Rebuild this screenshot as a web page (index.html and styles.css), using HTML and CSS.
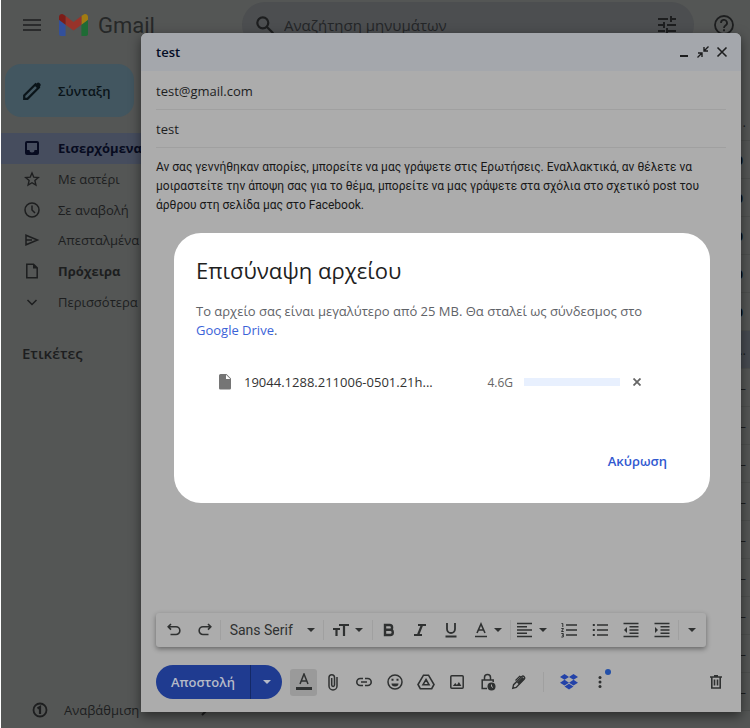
FILE: index.html
```html
<!DOCTYPE html>
<html lang="el">
<head>
<meta charset="utf-8">
<title>Gmail</title>
<link rel="stylesheet" href="styles.css">
</head>
<body>
<div class="app">
  <header class="topbar">
    <button class="icon-btn menu" aria-label="Μενού"><svg width="18" height="14" viewBox="0 0 18 14"><path d="M0 2h18M0 7h18M0 12h18" stroke="currentColor" stroke-width="1.600"/></svg></button>
    <a class="brand" href="#">
      <svg width="29" height="22" viewBox="52 42 88 66"><path fill="#33509b" d="M58 108h14V74L52 59v43c0 3.320 2.690 6 6 6"/><path fill="#1f6b35" d="M120 108h14c3.320 0 6-2.690 6-6V59l-20 15"/><path fill="#a17c12" d="M120 48v26l20-15v-8c0-7.420-8.470-11.650-14.400-7.200"/><path fill="#98332a" d="M72 74V48l24 18 24-18v26L96 92"/><path fill="#7d1c18" d="M52 51v8l20 15V48l-5.600-4.200c-5.940-4.450-14.400-.220-14.400 7.200"/></svg>
      <span>Gmail</span>
    </a>
    <form class="search">
      <svg width="18" height="18" viewBox="0 0 18 18" fill="none" stroke="currentColor" stroke-width="2.200"><circle cx="6.800" cy="6.800" r="5.500"/><path d="M11 11l6.200 6.200"/></svg>
      <input type="text" aria-label="Αναζήτηση μηνυμάτων" placeholder="Αναζήτηση μηνυμάτων">
      <button type="button" class="icon-btn" aria-label="Φίλτρα"><svg width="18" height="18" viewBox="0 0 18 18" stroke="currentColor" stroke-width="2"><path d="M0 3h10M13 3h5M13 0v6M0 9h6M9 9h9M6 6v6M0 15h7M10 15h8M9 12v6"/></svg></button>
    </form>
    <button class="icon-btn help" aria-label="Βοήθεια"><svg width="20" height="20" viewBox="0 0 20 20" fill="none" stroke="currentColor" stroke-width="1.800"><circle cx="10" cy="10" r="9"/><path d="M7 8a3 3 0 1 1 4.500 2.500Q10 11.500 10 13M10 14.200v2"/></svg></button>
  </header>
  <div class="main">
    <nav class="sidebar">
      <button class="compose-btn"><svg width="18" height="18" viewBox="0 0 18 18"><path d="M1.200 16.800v-3.300L12.500 2.200l3.300 3.300L4.500 16.800z" fill="none" stroke="currentColor" stroke-width="2.200"/><path d="M11.500 3.500L14 1q1.200-1 2.400 0l.8.800q1 1.200 0 2.400l-2.500 2.500z" fill="currentColor"/></svg>Σύνταξη</button>
      <div class="nav-list">
        <a class="nav active" href="#"><svg width="16" height="16" viewBox="0 0 16 16"><path fill-rule="evenodd" d="M3 1h10a2 2 0 0 1 2 2v10a2 2 0 0 1-2 2H3a2 2 0 0 1-2-2V3a2 2 0 0 1 2-2zM3 3v7h2.500a2.500 2.500 0 0 0 5 0H13V3z" fill="currentColor"/></svg>Εισερχόμενα</a>
        <a class="nav" href="#"><svg width="16" height="16" viewBox="0 0 16 16"><path d="M8 2l1.800 4.200 4.500.4-3.400 3 1 4.400L8 11.700 4.100 14l1-4.400-3.400-3 4.500-.4z" fill="none" stroke="currentColor" stroke-width="1.400"/></svg>Με αστέρι</a>
        <a class="nav" href="#"><svg width="16" height="16" viewBox="0 0 16 16" fill="none" stroke="currentColor" stroke-width="1.500"><circle cx="8" cy="8" r="7"/><path d="M8 3.500V8l3 3"/></svg>Σε αναβολή</a>
        <a class="nav" href="#"><svg width="16" height="16" viewBox="0 0 16 16" fill="none" stroke="currentColor" stroke-width="1.500"><path d="M2 3.200L13.500 8 2 12.800zM2 8h6"/></svg>Απεσταλμένα</a>
        <a class="nav strong" href="#"><svg width="16" height="16" viewBox="0 0 16 16"><path d="M2.800 1.200h6.700l3.700 3.700v9.900H2.800z" fill="none" stroke="currentColor" stroke-width="1.500"/><path d="M9 1v4.500h4.500z" fill="currentColor"/></svg>Πρόχειρα</a>
        <a class="nav" href="#"><svg width="16" height="16" viewBox="0 0 16 16"><path d="M3.500 6L8 10.500 12.500 6" fill="none" stroke="currentColor" stroke-width="1.500"/></svg>Περισσότερα</a>
      </div>
      <h2>Ετικέτες</h2>
      <a class="upgrade" href="#"><svg width="16" height="16" viewBox="0 0 16 16" fill="none" stroke="currentColor" stroke-width="1.800"><circle cx="8" cy="8" r="6.500"/><path d="M5.500 6.500L8 5v7" stroke-width="2.200"/></svg>Αναβάθμιση<svg class="arrow" width="14" height="14" viewBox="0 0 14 14"><path d="M1 7h11M7 2l5 5-5 5" fill="none" stroke="currentColor" stroke-width="2"/></svg></a>
    </nav>
    <ul class="mail-list">
      <li>.</li><li class="unread">0</li><li class="unread">0</li><li class="unread">0</li><li class="unread">0</li><li class="unread">0</li><li class="picked">..</li><li>–</li><li>–</li><li>–</li><li>–</li><li>–</li><li>–</li><li>–</li><li>–</li><li>–</li><li></li>
    </ul>
  </div>

  <section class="compose" aria-label="test">
    <header class="compose-head">
      <h1>test</h1>
      <button class="icon-btn" aria-label="Ελαχιστοποίηση"><svg width="12" height="12" viewBox="0 0 12 12"><path d="M2 10h8" stroke="currentColor" stroke-width="2"/></svg></button>
      <button class="icon-btn" aria-label="Σμίκρυνση"><svg width="12" height="12" viewBox="0 0 12 12" fill="none" stroke="currentColor" stroke-width="1.400"><path d="M11.500.5L7 5M7 1v4h4M.5 11.500L5 7M1 7h4v4"/></svg></button>
      <button class="icon-btn" aria-label="Κλείσιμο"><svg width="12" height="12" viewBox="0 0 12 12"><path d="M1.500 1.500l9 9M10.500 1.500l-9 9" stroke="currentColor" stroke-width="1.600"/></svg></button>
    </header>
    <div class="compose-body">
      <input class="field" type="text" aria-label="Προς" value="test@gmail.com">
      <input class="field" type="text" aria-label="Θέμα" value="test">
      <div class="message" contenteditable="true">Αν σας γεννήθηκαν απορίες, μπορείτε να μας γράψετε στις Ερωτήσεις. Εναλλακτικά, αν θέλετε να μοιραστείτε την άποψη σας για το θέμα, μπορείτε να μας γράψετε στα σχόλια στο σχετικό post του άρθρου στη σελίδα μας στο Facebook.</div>
      <div class="format">
        <button class="tool" aria-label="Αναίρεση"><svg width="16" height="16" viewBox="0 0 16 16" fill="none" stroke="currentColor" stroke-width="1.600"><path d="M5 2L2.200 4.800 5 7.600M2.500 4.800H10a3.800 3.800 0 0 1 0 7.700H4.500"/></svg></button>
        <button class="tool" aria-label="Επανάληψη"><svg width="16" height="16" viewBox="0 0 16 16" fill="none" stroke="currentColor" stroke-width="1.600"><path d="M11 2l2.800 2.800L11 7.600M13.500 4.800H6a3.800 3.800 0 0 0 0 7.700h5.500"/></svg></button>
        <i class="sep"></i>
        <button class="tool font">Sans Serif<i class="caret"></i></button>
        <i class="sep"></i>
        <button class="tool drop size" aria-label="Μέγεθος"><svg width="16" height="16" viewBox="0 0 16 16" fill="none" stroke="currentColor" stroke-width="2.200"><path d="M6 3h10M11 3v11M0 7h7M3.500 7v7"/></svg><i class="caret"></i></button>
        <i class="sep"></i>
        <button class="tool" aria-label="Έντονα"><svg width="16" height="16" viewBox="0 0 16 16" fill="none" stroke="currentColor" stroke-width="2.400"><path d="M4 3v10h5.200a2.600 2.600 0 0 0 0-5.200H4M4 3h4.700a2.400 2.400 0 0 1 0 4.800M4 1.800v12.400"/></svg></button>
        <button class="tool" aria-label="Πλάγια"><svg width="16" height="16" viewBox="0 0 16 16" fill="none" stroke="currentColor" stroke-width="2.200"><path d="M6 3h8M2 13h8M10 3L6 13"/></svg></button>
        <button class="tool" aria-label="Υπογράμμιση"><svg width="16" height="16" viewBox="0 0 16 16" fill="none" stroke="currentColor" stroke-width="1.800"><path d="M4 1v6a4 4 0 0 0 8 0V1M2.500 14.500h11"/></svg></button>
        <button class="tool drop" aria-label="Χρώμα"><svg width="14" height="16" viewBox="0 0 14 16" fill="none" stroke="currentColor" stroke-width="1.600"><path d="M3 11l4-9 4 9M4.500 8h5M1 14.500h12"/></svg><i class="caret"></i></button>
        <i class="sep"></i>
        <button class="tool drop" aria-label="Στοίχιση"><svg width="16" height="16" viewBox="0 0 16 16" stroke="currentColor" stroke-width="1.500"><path d="M0 1.500h15M0 4.800h10M0 8h15M0 11.200h10M0 14.500h15"/></svg><i class="caret"></i></button>
        <button class="tool" aria-label="Αριθμημένη λίστα"><svg width="16" height="16" viewBox="0 0 16 16" fill="none" stroke="currentColor" stroke-width="1.500"><path d="M5 3h11M5 8h11M5 13h11"/><path d="M.5 1.500h1.300v3.500M.3 6.500h2.200L.5 9.500h2.200M.3 11.500h2v3.500h-2M1 13.200h1" stroke-width="1"/></svg></button>
        <button class="tool" aria-label="Λίστα με κουκκίδες"><svg width="16" height="16" viewBox="0 0 16 16" stroke="currentColor" stroke-width="1.500"><path d="M5 3h11M5 8h11M5 13h11"/><path d="M.8 3h2M.8 8h2M.8 13h2" stroke-width="2"/></svg></button>
        <button class="tool" aria-label="Λιγότερη εσοχή"><svg width="16" height="16" viewBox="0 0 16 16" stroke="currentColor" stroke-width="1.500"><path d="M.5 1.500h15M6.500 4.800h9M6.500 8h9M6.500 11.200h9M.5 14.500h15"/><path d="M4 5L1 8l3 3z" fill="currentColor" stroke="none"/></svg></button>
        <button class="tool" aria-label="Περισσότερη εσοχή"><svg width="16" height="16" viewBox="0 0 16 16" stroke="currentColor" stroke-width="1.500"><path d="M.5 1.500h15M6.500 4.800h9M6.500 8h9M6.500 11.200h9M.5 14.500h15"/><path d="M1 5l3 3-3 3z" fill="currentColor" stroke="none"/></svg></button>
        <i class="sep"></i>
        <button class="tool more" aria-label="Περισσότερα"><i class="caret"></i></button>
      </div>
      <footer class="actions">
        <div class="send"><button class="send-main">Αποστολή</button><button class="send-more" aria-label="Επιλογές αποστολής"><i class="caret"></i></button></div>
        <button class="act on" aria-label="Μορφοποίηση"><svg width="16" height="18" viewBox="0 0 16 18" fill="none" stroke="currentColor" stroke-width="1.500"><path d="M4 11l4-10 4 10M5.300 8h5.400"/><path d="M0 15.500h16" stroke-width="3"/></svg></button>
        <button class="act" aria-label="Επισύναψη"><svg width="16" height="18" viewBox="0 0 16 18" fill="none" stroke="currentColor" stroke-width="1.500"><path d="M12 4v9a4 4 0 0 1-8 0V4.500a2.700 2.700 0 0 1 5.500 0V12a1.400 1.400 0 0 1-2.800 0V5"/></svg></button>
        <button class="act" aria-label="Σύνδεσμος"><svg width="16" height="16" viewBox="0 0 16 16" fill="none" stroke="currentColor" stroke-width="1.600"><path d="M7 4.500H4.300a3.500 3.500 0 0 0 0 7H7M9 4.500h2.700a3.500 3.500 0 0 1 0 7H9M5 8h6"/></svg></button>
        <button class="act" aria-label="Emoji"><svg width="16" height="16" viewBox="0 0 16 16" fill="none" stroke="currentColor" stroke-width="1.500"><circle cx="8" cy="8" r="7"/><path d="M4.500 5.800h2M9.500 5.800h2" stroke-width="2"/><path d="M4.500 9.500h7a3.500 3 0 0 1-7 0z" fill="currentColor" stroke="none"/></svg></button>
        <button class="act" aria-label="Drive"><svg width="18" height="16" viewBox="0 0 18 16" fill="none" stroke="currentColor" stroke-width="1.600"><path d="M6.500 1.200h5L17 10.500l-2.300 4.200H3.300L1 10.500zM9 5.500l3 5.200H6z"/></svg></button>
        <button class="act" aria-label="Εικόνα"><svg width="16" height="16" viewBox="0 0 16 16"><rect x="1.800" y="1.800" width="12.400" height="12.400" rx="1" fill="none" stroke="currentColor" stroke-width="1.500"/><path d="M3.800 12l2.500-3 1.600 2 2-3 2.500 4z" fill="currentColor"/></svg></button>
        <button class="act" aria-label="Εμπιστευτικό"><svg width="16" height="18" viewBox="0 0 16 18" fill="none" stroke="currentColor" stroke-width="1.500"><path d="M7 15.500H2.200V7h11v2M4.500 7V4.500a3 3 0 0 1 6 0V7"/><circle cx="11.500" cy="13.500" r="4" fill="currentColor" stroke="none"/><path d="M11.500 11.500v2l1.500 1" stroke="#acacac" stroke-width="1"/></svg></button>
        <button class="act" aria-label="Υπογραφή"><svg width="16" height="16" viewBox="0 0 16 16" fill="none" stroke="currentColor" stroke-width="1.400"><path d="M1.800 14.200l.8-3.500L10.800 2.500q1.200-1 2.400.2 1.200 1.200.1 2.400L5.200 13.400z"/><path d="M7 9.500l5.500-5.500" stroke-width="3"/><path d="M4.500 6.500l4.200-4.200 1.500 1" stroke-width="1.200"/></svg></button>
        <i class="sep"></i>
        <button class="act blue" aria-label="Dropbox"><svg width="18" height="16" viewBox="0 0 18 16" fill="currentColor"><path d="M4.500 0L9 2.900 4.500 5.800 0 2.900zM13.500 0L18 2.900l-4.500 2.900L9 2.900zM4.500 5.800L9 8.700l-4.500 2.900L0 8.700zM13.500 5.800L18 8.700l-4.500 2.900L9 8.700zM9 9.700l4.500 2.900L9 15.500l-4.500-2.900z"/></svg></button>
        <button class="act dotted" aria-label="Περισσότερες επιλογές"><svg width="4" height="14" viewBox="0 0 4 14" fill="currentColor"><circle cx="2" cy="2.500" r="1.500"/><circle cx="2" cy="7" r="1.500"/><circle cx="2" cy="11.500" r="1.500"/></svg><i class="badge"></i></button>
        <button class="act trash" aria-label="Απόρριψη"><svg width="12" height="14" viewBox="0 0 12 14" fill="none" stroke="currentColor" stroke-width="1.600"><path d="M0 2h12M4 .8h4M1.800 2v11h8.400V2M4.500 4.500v6M7.500 4.500v6"/></svg></button>
      </footer>
    </div>
    <div class="dialog" role="dialog" aria-labelledby="dialog-title">
      <h2 id="dialog-title">Επισύναψη αρχείου</h2>
      <p>Το αρχείο σας είναι μεγαλύτερο από 25 MB. Θα σταλεί ως σύνδεσμος στο <a href="#">Google Drive</a>.</p>
      <div class="file">
        <svg width="12" height="16" viewBox="0 0 12 16"><path d="M1.500 0H7.500L12 4.500v9.700a1.300 1.300 0 0 1-1.300 1.300H1.300A1.300 1.300 0 0 1 0 14.200V1.500A1.500 1.500 0 0 1 1.500 0z" fill="#757575"/><path d="M7 .8V5h4.300z" fill="#fff"/></svg>
        <span class="file-name">19044.1288.211006-0501.21h...</span>
        <span class="file-size">4.6G</span>
        <span class="bar"></span>
        <button class="icon-btn" aria-label="Κατάργηση"><svg width="8" height="8" viewBox="0 0 8 8"><path d="M.5.5l7 7M7.500.5l-7 7" stroke="#666" stroke-width="1.800"/></svg></button>
      </div>
      <button class="cancel">Ακύρωση</button>
    </div>
  </section>
</div>
</body>
</html>
```
FILE: styles.css
```css
* { box-sizing: border-box; }
body { margin: 0; background: #545655; font-family: "Open Sans", "Noto Sans", sans-serif; font-size: 13px; color: #1d1e1f; }
button, input { font: inherit; color: inherit; border: 0; background: none; padding: 0; margin: 0; }
a { color: inherit; text-decoration: none; }
h1, h2, p, ul { margin: 0; padding: 0; }
svg { display: block; flex: none; }
.icon-btn { display: flex; align-items: center; justify-content: center; }

.app { position: relative; display: flex; flex-direction: column; height: 100vh; overflow: hidden; border-left: 1px solid #fff; }
.topbar { display: flex; align-items: center; height: 50px; padding: 0 16px 0 22px; }
.brand { display: flex; align-items: center; gap: 10px; width: 183px; margin-left: 18px; font: 22px Roboto, sans-serif; color: #262828; }
.search { display: flex; flex: 1; align-items: center; gap: 10px; height: 46px; padding: 0 18px 0 14px; border-radius: 23px; background: #4c4e50; }
.search input { flex: 1; min-width: 0; font-size: 15px; }
.search input::placeholder { color: #242628; opacity: 1; }
.help { margin-left: 20px; }

.main { display: flex; flex: 1; min-height: 0; }
.sidebar { display: flex; flex-direction: column; width: 242px; padding-top: 14px; }
.compose-btn { display: flex; align-items: center; gap: 17px; align-self: flex-start; width: 129px; height: 53px; margin: 0 0 16px 4px; padding-left: 18px; border-radius: 16px; background: #425660; font-weight: 600; color: #0a1419; }
.nav-list { display: grid; grid-auto-rows: 1fr; height: 184px; }
.nav { display: flex; align-items: center; gap: 18px; padding-left: 23px; }
.active { background: #464d5e; color: #070b20; font-weight: 700; }
.strong { font-weight: 700; }
.sidebar h2 { margin: 25px 21px; font-size: 15px; font-weight: 600; line-height: 22px; }
.upgrade { display: flex; align-items: center; gap: 16px; height: 36px; margin-top: auto; padding-left: 31px; }
.arrow { margin-left: 40px; }
.mail-list { flex: 1; padding-top: 53px; list-style: none; text-align: right; }
.mail-list li { height: 38px; padding-right: 4px; border-bottom: 1px solid #4d4f4e; line-height: 38px; }
.mail-list .unread { padding-right: 7px; font-weight: 700; color: #05070f; }
.mail-list .picked { background: #464a50; }

.compose { position: absolute; inset: 33px 9px 16px 140px; display: flex; flex-direction: column; border-radius: 6px 6px 0 0; background: #acacac; box-shadow: 0 4px 12px rgba(0, 0, 0, .5); }
.compose-head { display: flex; align-items: center; gap: 7px; height: 38px; padding: 0 13px 0 15px; border-radius: 6px 6px 0 0; background: #a4a7ac; }
.compose-head h1 { flex: 1; font-size: 13px; font-weight: 600; color: #030d25; }
.compose-body { display: flex; flex: 1; flex-direction: column; padding: 1px 15px 0; }
.field { height: 38px; border-bottom: 1px solid #a0a0a0; }
.message { flex: 1; padding-top: 10px; font: 12px/19px Roboto, sans-serif; color: #181818; }
.format { display: flex; align-items: center; height: 34px; margin-right: 20px; padding: 0 2px; border-radius: 3px; background: #acacac; box-shadow: 0 2px 5px rgba(0, 0, 0, .4); color: #2f3131; }
.tool { display: flex; flex: 1 1 31px; align-items: center; justify-content: center; }
.font { flex-basis: 102px; gap: 14px; font: 14px Roboto, sans-serif; white-space: nowrap; }
.drop { flex-basis: 43px; gap: 6px; }
.size { flex-basis: 48px; }
.more { flex-basis: 25px; }
.caret { border: 4px solid transparent; border-top-color: currentColor; border-bottom: 0; }
.sep { width: 1px; height: 20px; background: #a0a0a0; }
.actions { display: flex; align-items: center; height: 65px; padding-top: 5px; color: #2f3131; }
.send { display: flex; height: 34px; margin-right: 8px; border-radius: 17px; overflow: hidden; background: #1f3b90; color: #b5bac8; }
.send-main { width: 95px; border-right: 1px solid #142967; font-weight: 600; }
.send-more { display: flex; align-items: center; justify-content: center; width: 31px; }
.act { display: flex; align-items: center; justify-content: center; width: 31px; height: 27px; }
.on { width: 27px; border-radius: 3px; background: #9a9a9a; }
.actions .sep { margin: 0 9px; }
.blue { color: #2342a8; }
.dotted { position: relative; }
.badge { position: absolute; top: 0; right: 4px; width: 6px; height: 6px; border-radius: 3px; background: #2350a8; }
.trash { width: 20px; margin-left: auto; }

.dialog { position: absolute; top: 200px; left: 33px; right: 31px; padding: 21px 22px 22px; border-radius: 27px; background: #fff; color: #1f1f1f; }
.dialog h2 { font-size: 22px; font-weight: 400; line-height: 32px; }
.dialog p { margin-top: 16px; line-height: 19px; color: #5f6368; }
.dialog a { color: #3b63d8; }
.file { display: flex; align-items: center; height: 24px; margin: 30px 47px 0 23px; color: #333; }
.file-name { flex: 1; margin-left: 13px; }
.file-size { font-size: 12px; color: #666; }
.bar { width: 96px; height: 8px; margin: 0 13px 0 11px; background: #e8f0fe; }
.cancel { display: block; margin: 56px 21px 9px auto; font-weight: 600; line-height: 22px; color: #3058d0; }
```
